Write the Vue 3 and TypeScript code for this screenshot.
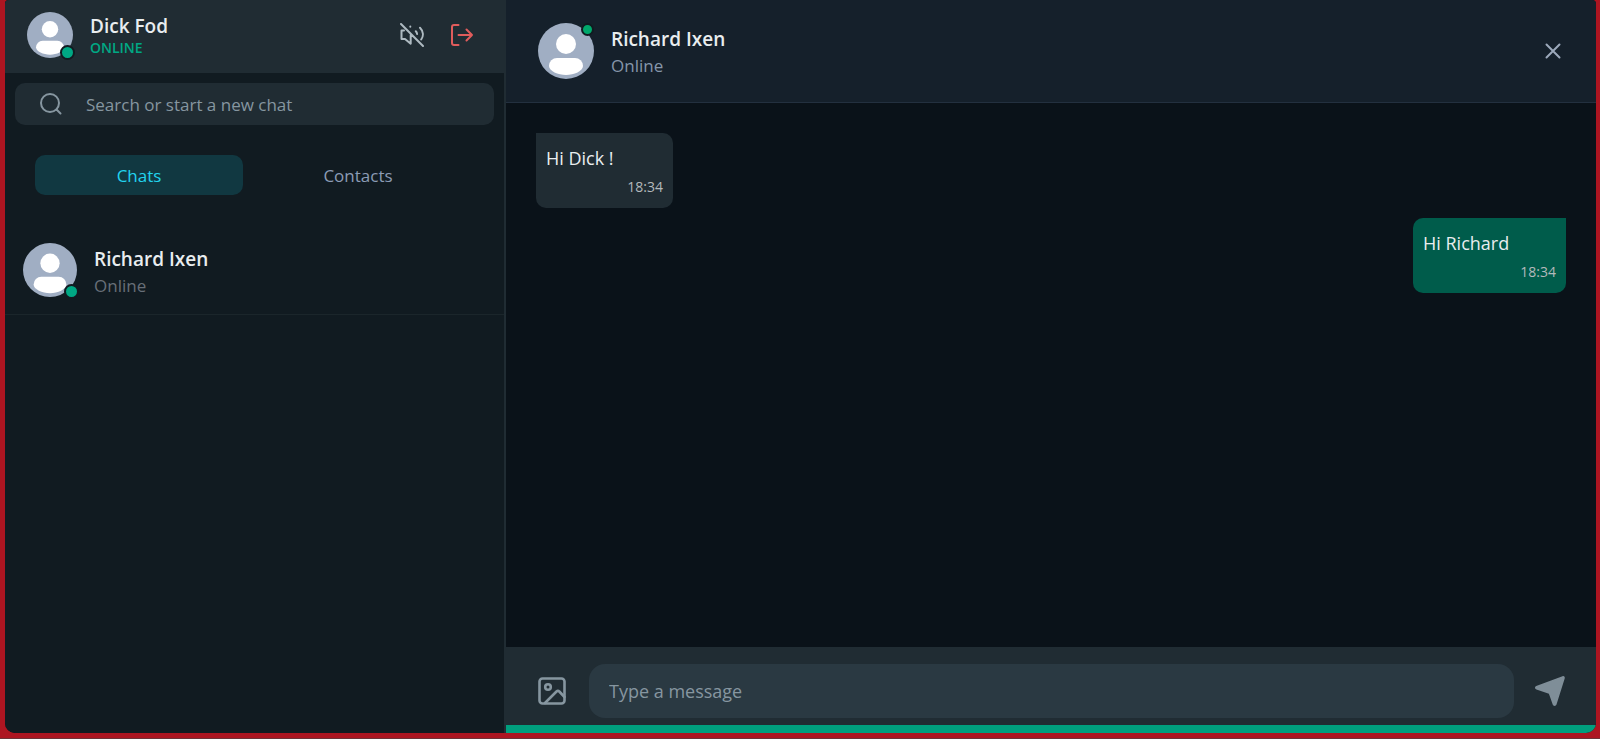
<script setup lang="ts">
import { ref } from 'vue'

interface Message {
  id: number
  text: string
  time: string
  own: boolean
}

const me = { name: 'Dick Fod', status: 'ONLINE' }
const contact = { name: 'Richard Ixen', status: 'Online' }
const tabs = ['Chats', 'Contacts']
const activeTab = ref('Chats')
const search = ref('')
const draft = ref('')
const messages = ref<Message[]>([
  { id: 1, text: 'Hi Dick !', time: '18:34', own: false },
  { id: 2, text: 'Hi Richard', time: '18:34', own: true },
])
</script>

<template>
  <div class="frame">
    <main class="app">
      <aside class="sidebar">
        <header class="profile">
          <div class="avatar small">
            <svg viewBox="0 0 56 56" aria-hidden="true">
              <circle cx="28" cy="28" r="28" fill="#a0aec3" />
              <circle cx="28" cy="21" r="10" fill="#fff" />
              <path d="M19 35h18a8 8 0 0 1 8 8c0 5-9 9-17 9s-17-4-17-9a8 8 0 0 1 8-8Z" fill="#fff" />
            </svg>
            <span class="dot"></span>
          </div>
          <div class="who">
            <h1 class="name">{{ me.name }}</h1>
            <p class="state">{{ me.status }}</p>
          </div>
          <button class="icon-button" type="button" aria-label="Mute sounds">
            <svg class="icon" viewBox="0 0 24 24" fill="none" stroke="#aebac1" stroke-width="2" stroke-linecap="round" stroke-linejoin="round">
              <path d="M1 1l22 22M4 7.500H1.500V16H5l5.700 4.700V12M10.300 3.500v.3M15.800 8.200c.8.800 1.200 1.700 1.300 2.800M20 4.800c3.300 3.300 3.800 8 1.200 11.700" />
            </svg>
          </button>
          <button class="icon-button" type="button" aria-label="Log out">
            <svg class="icon" viewBox="0 0 24 24" fill="none" stroke="#e05c5c" stroke-width="2" stroke-linecap="round" stroke-linejoin="round">
              <path d="M8.500 2H4a2 2 0 0 0-2 2v16a2 2 0 0 0 2 2h4.500M8.500 12H22M16.500 6.500 22 12l-5.500 5.500" />
            </svg>
          </button>
        </header>

        <label class="search">
          <svg class="icon" viewBox="0 0 24 24" fill="none" stroke="#8696a0" stroke-width="2" stroke-linecap="round" aria-hidden="true">
            <circle cx="11" cy="11" r="9" />
            <path d="m17.500 17.500 4 4" />
          </svg>
          <input v-model="search" type="text" placeholder="Search or start a new chat" aria-label="Search or start a new chat" />
        </label>

        <nav class="tabs">
          <button
            v-for="tab in tabs"
            :key="tab"
            type="button"
            class="tab"
            :class="{ active: tab === activeTab }"
            @click="activeTab = tab"
          >{{ tab }}</button>
        </nav>

        <ul class="list">
          <li>
            <button class="row" type="button">
              <span class="avatar medium">
                <svg viewBox="0 0 56 56" aria-hidden="true">
                  <circle cx="28" cy="28" r="28" fill="#a0aec3" />
                  <circle cx="28" cy="21" r="10" fill="#fff" />
                  <path d="M19 35h18a8 8 0 0 1 8 8c0 5-9 9-17 9s-17-4-17-9a8 8 0 0 1 8-8Z" fill="#fff" />
                </svg>
                <span class="dot"></span>
              </span>
              <span class="who contact">
                <span class="name">{{ contact.name }}</span>
                <span class="status dim">{{ contact.status }}</span>
              </span>
            </button>
          </li>
        </ul>
      </aside>

      <section class="chat">
        <header class="chat-head">
          <div class="avatar">
            <svg viewBox="0 0 56 56" aria-hidden="true">
              <circle cx="28" cy="28" r="28" fill="#a0aec3" />
              <circle cx="28" cy="21" r="10" fill="#fff" />
              <path d="M19 35h18a8 8 0 0 1 8 8c0 5-9 9-17 9s-17-4-17-9a8 8 0 0 1 8-8Z" fill="#fff" />
            </svg>
            <span class="dot top"></span>
          </div>
          <div class="who contact">
            <h2 class="name">{{ contact.name }}</h2>
            <p class="status">{{ contact.status }}</p>
          </div>
          <button class="icon-button" type="button" aria-label="Close chat">
            <svg class="icon" viewBox="0 0 24 24" fill="none" stroke="#9ca9bb" stroke-width="2" stroke-linecap="round">
              <path d="m5.500 5.500 13 13M18.500 5.500l-13 13" />
            </svg>
          </button>
        </header>

        <div class="messages">
          <article v-for="m in messages" :key="m.id" class="bubble" :class="{ own: m.own }">
            <p class="text">{{ m.text }}</p>
            <time class="time">{{ m.time }}</time>
          </article>
        </div>

        <form class="composer" @submit.prevent>
          <button class="icon-button" type="button" aria-label="Attach image">
            <svg class="icon large" viewBox="0 0 32 32" fill="none" stroke="#8696a0" stroke-width="2.600" stroke-linecap="round" stroke-linejoin="round">
              <rect x="3.500" y="3.500" width="25" height="25" rx="3" />
              <circle cx="12" cy="12" r="2.800" />
              <path d="m9 28 11.500-11.500a2 2 0 0 1 2.800 0L28.500 22" />
            </svg>
          </button>
          <input v-model="draft" class="entry" type="text" placeholder="Type a message" aria-label="Type a message" />
          <button class="icon-button" type="submit" aria-label="Send">
            <svg class="icon large" viewBox="0 0 32 32" fill="#7f8e98">
              <path d="M2.200 10.900 28.500 1.200c1.500-.5 2.700.6 2.200 2.200l-8.200 26.200c-.6 1.700-3.200 1.700-3.800 0L14.900 18.800 2.400 14.500c-1.900-.7-1.900-2.900-.2-3.600Z" />
            </svg>
          </button>
        </form>
      </section>
    </main>
  </div>
</template>

<style>
body {
  margin: 0;
}
</style>

<style scoped>
* {
  box-sizing: border-box;
}

.frame {
  display: flex;
  min-height: 100vh;
  padding: 0 4px 5px 5px;
  background: #ad1521;
  border-bottom: 1px solid #6e3439;
  font-family: "Segoe UI", "Open Sans", "Noto Sans", sans-serif;
  color: #e9edef;
}

.app {
  display: grid;
  grid-template-columns: 501px 1fr;
  flex: 1;
  overflow: hidden;
  border-radius: 4px 4px 10px 10px;
  background: #0a1219;
}

h1, h2, p, ul {
  margin: 0;
  padding: 0;
}

button, input {
  border: 0;
  padding: 0;
  background: none;
  font: inherit;
  color: inherit;
  outline: none;
}

button {
  cursor: pointer;
}

svg {
  display: block;
}

.sidebar {
  display: flex;
  flex-direction: column;
  border-right: 2px solid #202c33;
  background: #111b21;
}

.profile {
  display: flex;
  align-items: center;
  height: 73px;
  padding: 0 30px 3px 22px;
  background: #202c33;
}

.avatar {
  position: relative;
  flex: none;
  width: 56px;
  height: 56px;
}

.avatar.small {
  width: 46px;
  height: 46px;
}

.avatar.medium {
  width: 54px;
  height: 54px;
}

.dot {
  position: absolute;
  right: -2px;
  bottom: -2px;
  width: 15px;
  height: 15px;
  border: 2px solid #111b21;
  border-radius: 50%;
  background: #00a884;
}

.dot.top {
  top: 0;
  right: 0;
  width: 13px;
  height: 13px;
  background: #00a86b;
}

.who {
  display: flex;
  flex: 1;
  flex-direction: column;
  margin-left: 17px;
  text-align: left;
}

.who.contact {
  padding-top: 5px;
}

.name {
  font-size: 19px;
  font-weight: 600;
  line-height: 26px;
}

.state {
  font-size: 14px;
  font-weight: 600;
  line-height: 18px;
  color: #00a884;
}

.status {
  font-size: 17px;
  line-height: 28px;
  color: #8696aa;
}

.dim {
  color: #686f78;
}

.icon {
  width: 24px;
  height: 24px;
}

.icon.large {
  width: 32px;
  height: 32px;
}

.profile .icon-button + .icon-button {
  margin-left: 26px;
}

.search {
  display: flex;
  align-items: center;
  gap: 23px;
  height: 42px;
  margin: 10px 10px 0;
  padding: 0 24px;
  border-radius: 10px;
  background: #202c33;
}

.search input {
  flex: 1;
  min-width: 0;
  font-size: 17px;
}

input::placeholder {
  color: #8696a0;
  opacity: 1;
}

.tabs {
  display: flex;
  gap: 11px;
  padding: 30px 42px 0 30px;
}

.tab {
  flex: 1;
  height: 40px;
  border-radius: 10px;
  font-size: 17px;
  color: #8c9bb5;
}

.tab.active {
  background: #113841;
  color: #22d3ee;
}

.list {
  margin-top: 31px;
  list-style: none;
}

.row {
  display: flex;
  align-items: center;
  width: 100%;
  height: 89px;
  padding: 0 18px;
  border-bottom: 1px solid #1b262b;
}

.chat {
  display: flex;
  flex-direction: column;
  min-width: 0;
  border-bottom: 8px solid #009f7e;
}

.chat-head {
  display: flex;
  align-items: center;
  height: 103px;
  padding: 0 31px 1px 32px;
  border-bottom: 1px solid #23303f;
  background: #15202b;
}

.messages {
  display: flex;
  flex: 1;
  flex-direction: column;
  align-items: flex-start;
  gap: 10px;
  padding: 30px;
}

.bubble {
  display: flex;
  flex-direction: column;
  min-width: 137px;
  padding: 10px 10px 7px;
  border-radius: 0 10px 10px 10px;
  background: #202c33;
}

.bubble.own {
  align-self: flex-end;
  min-width: 153px;
  border-radius: 10px 0 10px 10px;
  background: #005c4b;
}

.text {
  font-size: 18px;
  line-height: 30px;
}

.time {
  align-self: flex-end;
  font-size: 14px;
  line-height: 28px;
  color: #b3b9bc;
}

.composer {
  display: flex;
  align-items: center;
  height: 78px;
  padding: 10px 30px 0;
  background: #202c33;
}

.entry {
  flex: 1;
  min-width: 0;
  height: 54px;
  margin: 0 20px 0 21px;
  padding: 0 20px;
  border-radius: 16px;
  background: #2a3942;
  font-size: 18px;
}
</style>
